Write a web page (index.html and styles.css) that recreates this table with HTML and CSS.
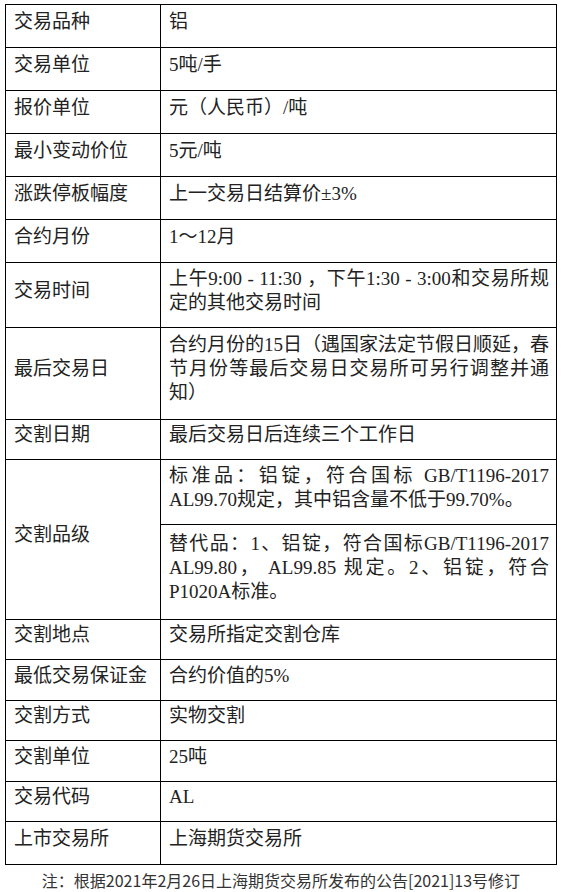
FILE: index.html
```html
<!DOCTYPE html>
<html lang="zh-CN">
<head>
<meta charset="utf-8">
<link rel="stylesheet" href="styles.css">
</head>
<body>
<table class="spec">
  <tr class="h43"><td class="k">交易品种</td><td class="v">铝</td></tr>
  <tr class="h43"><td class="k">交易单位</td><td class="v">5吨/手</td></tr>
  <tr class="h43"><td class="k">报价单位</td><td class="v">元（人民币）/吨</td></tr>
  <tr class="h43"><td class="k">最小变动价位</td><td class="v">5元/吨</td></tr>
  <tr class="h43"><td class="k">涨跌停板幅度</td><td class="v">上一交易日结算价±3%</td></tr>
  <tr class="h43"><td class="k">合约月份</td><td class="v">1～12月</td></tr>
  <tr class="h65"><td class="k">交易时间</td><td class="v">上午9:00 - 11:30 ，下午1:30 - 3:00和交易所规定的其他交易时间</td></tr>
  <tr class="h92"><td class="k">最后交易日</td><td class="v">合约月份的15日（遇国家法定节假日顺延，春节月份等最后交易日交易所可另行调整并通知）</td></tr>
  <tr class="h40"><td class="k">交割日期</td><td class="v">最后交易日后连续三个工作日</td></tr>
  <tr class="h65"><td class="k" rowspan="2">交割品级</td><td class="v">标准品：铝锭，符合国标 GB/T1196-2017 AL99.70规定，其中铝含量不低于99.70%。</td></tr>
  <tr class="h95"><td class="v">替代品：1、铝锭，符合国标GB/T1196-2017 AL99.80， AL99.85 规定。2、铝锭，符合P1020A标准。</td></tr>
  <tr class="h40"><td class="k">交割地点</td><td class="v">交易所指定交割仓库</td></tr>
  <tr class="h41"><td class="k">最低交易保证金</td><td class="v">合约价值的5%</td></tr>
  <tr class="h40"><td class="k">交割方式</td><td class="v">实物交割</td></tr>
  <tr class="h41"><td class="k">交割单位</td><td class="v">25吨</td></tr>
  <tr class="h40"><td class="k">交易代码</td><td class="v">AL</td></tr>
  <tr class="h43"><td class="k">上市交易所</td><td class="v">上海期货交易所</td></tr>
</table>
<p class="note">注：根据2021年2月26日上海期货交易所发布的公告[2021]13号修订</p>
</body>
</html>
```

FILE: styles.css
```css
html, body {
  margin: 0;
  padding: 0;
  background: #fff;
}

body {
  padding-top: 4px;
}

.spec {
  border-collapse: collapse;
  width: 552px;
  margin-left: 5px;
  font-family: "Liberation Serif", "Noto Sans CJK SC", serif;
  font-size: 19px;
  line-height: 24px;
  color: #222;
}

.spec td {
  border: 1px solid #000;
  padding: 0 7px 9px 8px;
  vertical-align: middle;
  text-align: justify;
}

.spec .k {
  width: 146px;
  padding-left: 8px;
  padding-right: 0;
  white-space: nowrap;
}

.h40 { height: 40px; }
.h41 { height: 41px; }
.h43 { height: 43px; }
.h65 { height: 65px; }
.h92 { height: 92px; }
.h95 { height: 95px; }

.note {
  margin: 4px 0 0;
  text-align: center;
  font-family: "Noto Sans CJK SC", sans-serif;
  font-size: 16px;
  line-height: 22px;
  color: #333;
}
```
